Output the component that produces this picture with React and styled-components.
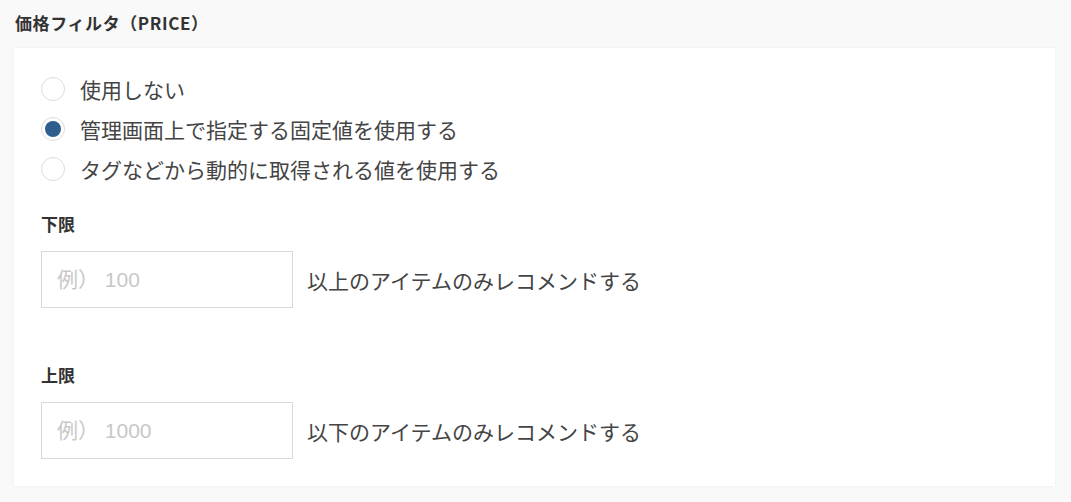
import styled, { createGlobalStyle } from 'styled-components'

const GlobalStyle = createGlobalStyle`
  body {
    margin: 0;
    background: #f9f9f9;
    font-family: "Noto Sans CJK JP", "Liberation Sans", sans-serif;
    color: #333;
  }
`

const Page = styled.div`
  padding: 11px 16px 16px 14px;
`

const Heading = styled.h2`
  margin: 0 0 13px 1px;
  font-size: 17px;
  letter-spacing: 0.6px;
  line-height: 24px;
  font-weight: 700;
  color: #333;
`

const Card = styled.div`
  background: #fff;
  box-shadow: 0 0 3px rgba(0, 0, 0, 0.06);
  padding: 26px 27px 27px 27px;
`

const RadioList = styled.div`
  display: flex;
  flex-direction: column;
  gap: 10px;
  margin-bottom: 30px;
`

const RadioRow = styled.label`
  display: flex;
  align-items: center;
  gap: 15px;
  height: 30px;
  font-size: 21px;
  color: #444;
  cursor: pointer;
`

const Circle = styled.span`
  width: 24px;
  height: 24px;
  box-sizing: border-box;
  border: 1px solid #dcdcdc;
  border-radius: 50%;
  display: flex;
  align-items: center;
  justify-content: center;
  flex-shrink: 0;

  &::after {
    content: '';
    width: 16px;
    height: 16px;
    border-radius: 50%;
    background: ${p => (p.$checked ? '#2d5e8e' : 'transparent')};
  }
`

const Label = styled.div`
  font-size: 17px;
  font-weight: 700;
  line-height: 20px;
  color: #333;
  margin-bottom: 17px;
`

const FieldRow = styled.div`
  display: flex;
  align-items: center;
  gap: 14px;
  margin-bottom: ${p => p.$last ? '0' : '57px'};
`

const Input = styled.input`
  width: 252px;
  height: 57px;
  box-sizing: border-box;
  border: 1px solid #d9d9d9;
  padding: 0 15px;
  font-family: "Liberation Sans", "Noto Sans CJK JP", sans-serif;
  font-size: 21px;
  color: #333;
  outline: none;

  &::placeholder {
    color: #c8c8c8;
  }
`

const Suffix = styled.span`
  font-size: 21px;
  color: #444;
`

const options = [
  { label: '使用しない', checked: false },
  { label: '管理画面上で指定する固定値を使用する', checked: true },
  { label: 'タグなどから動的に取得される値を使用する', checked: false },
]

const App = () => {
  return (
    <Page>
      <GlobalStyle />
      <Heading>価格フィルタ（PRICE）</Heading>
      <Card>
        <RadioList>
          {options.map(o => (
            <RadioRow key={o.label}>
              <Circle $checked={o.checked} />
              {o.label}
            </RadioRow>
          ))}
        </RadioList>
        <Label>下限</Label>
        <FieldRow>
          <Input placeholder="例） 100" />
          <Suffix>以上のアイテムのみレコメンドする</Suffix>
        </FieldRow>
        <Label>上限</Label>
        <FieldRow $last>
          <Input placeholder="例） 1000" />
          <Suffix>以下のアイテムのみレコメンドする</Suffix>
        </FieldRow>
      </Card>
    </Page>
  )
}

export default App
